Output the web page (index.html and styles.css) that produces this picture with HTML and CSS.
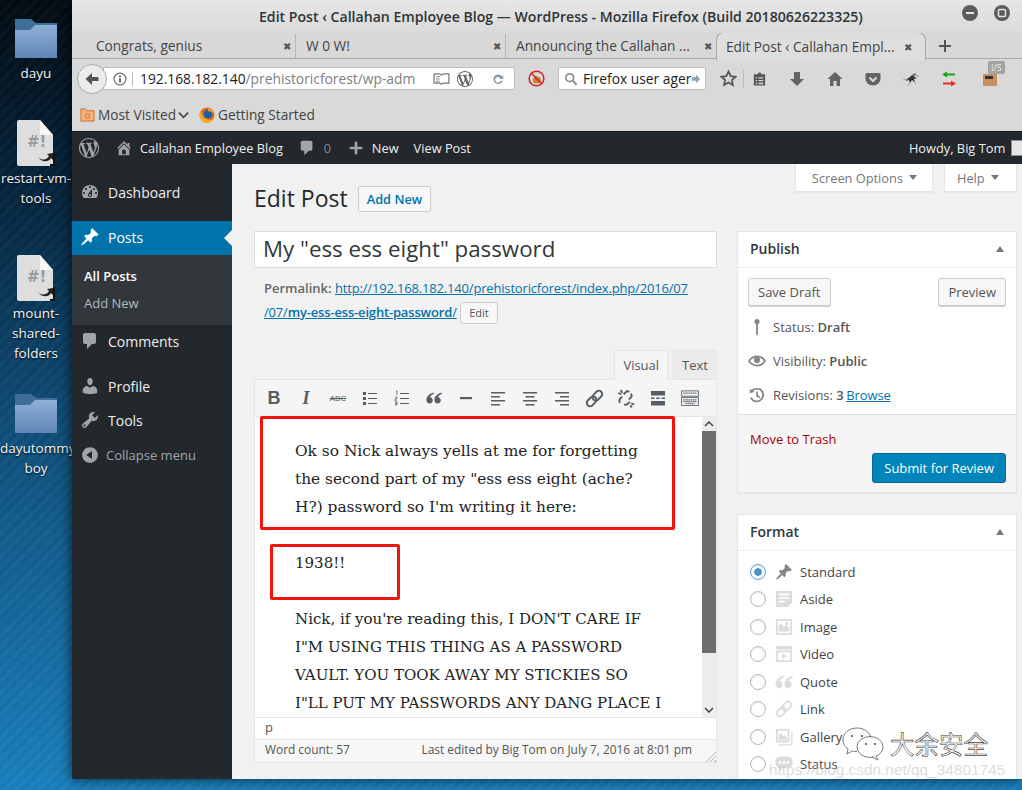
FILE: index.html
```html
<!DOCTYPE html>
<html lang="en">
<head>
    <meta charset="UTF-8">
    <meta name="viewport" content="width=device-width, initial-scale=1.0">
    <title>Edit Post</title>
    <link rel="stylesheet" href="styles.css">
</head>
<body>
<svg class="iconSheet" xmlns="http://www.w3.org/2000/svg">
    <defs><linearGradient id="folderFill" x1="0" y1="0" x2="0" y2="1"><stop offset="0" stop-color="#8fb0d6"/><stop offset="1" stop-color="#5f86b6"/></linearGradient></defs>
    <symbol id="wp" viewBox="0 0 20 20"><path d="M20 10c0-5.51-4.49-10-10-10C4.48 0 0 4.49 0 10c0 5.52 4.48 10 10 10 5.51 0 10-4.48 10-10zM7.78 15.37L4.37 6.22c.55-.02 1.17-.08 1.17-.08.5-.06.44-1.13-.06-1.11 0 0-1.45.11-2.37.11-.18 0-.37 0-.58-.01C4.12 2.69 6.87 1.11 10 1.11c2.33 0 4.45.87 6.05 2.34-.68-.11-1.65.39-1.65 1.58 0 .74.45 1.36.9 2.1.35.61.55 1.36.55 2.46 0 1.49-1.4 5-1.4 5l-3.03-8.37c.54-.02.82-.17.82-.17.5-.05.44-1.25-.06-1.22 0 0-1.44.12-2.38.12-.87 0-2.33-.12-2.33-.12-.5-.03-.56 1.2-.06 1.22l.92.08 1.26 3.41zM17.41 10c.24-.64.74-1.87.43-4.25.7 1.29 1.05 2.71 1.05 4.25 0 3.29-1.73 6.24-4.4 7.78.97-2.59 1.94-5.2 2.92-7.78zM6.1 18.09C3.12 16.65 1.11 13.53 1.11 10c0-1.3.23-2.48.72-3.59C3.25 10.3 4.67 14.2 6.1 18.09zm4.03-6.63l2.58 6.98c-.86.29-1.76.45-2.71.45-.79 0-1.57-.11-2.29-.33.81-2.38 1.62-4.74 2.42-7.1z"/></symbol>
    <symbol id="dashboard" viewBox="0 0 20 20"><path d="M3.76 16h12.48c1.1-1.37 1.76-3.11 1.76-5 0-4.42-3.58-8-8-8s-8 3.58-8 8c0 1.89.66 3.63 1.76 5zM10 4c.55 0 1 .45 1 1s-.45 1-1 1-1-.45-1-1 .45-1 1-1zM6 6c.55 0 1 .45 1 1s-.45 1-1 1-1-.45-1-1 .45-1 1-1zm8 0c.55 0 1 .45 1 1s-.45 1-1 1-1-.45-1-1 .45-1 1-1zm-5.37 5.55L12 7v6c0 1.1-.9 2-2 2s-2-.9-2-2c0-.57.24-1.08.63-1.45zM4 10c.55 0 1 .45 1 1s-.45 1-1 1-1-.45-1-1 .45-1 1-1zm12 0c.55 0 1 .45 1 1s-.45 1-1 1-1-.45-1-1 .45-1 1-1zm-5 3c0-.55-.45-1-1-1s-1 .45-1 1 .45 1 1 1 1-.45 1-1z" fill-rule="evenodd"/></symbol>
    <symbol id="pin" viewBox="0 0 20 20"><path d="M10.44 3.02l1.82-1.82 6.36 6.35-1.83 1.82c-1.05-.68-2.48-.57-3.41.36l-.75.75c-.92.93-1.04 2.35-.35 3.41l-1.83 1.82-2.41-2.41-2.8 2.79c-.42.42-3.38 2.71-3.8 2.29s1.86-3.39 2.28-3.81l2.79-2.79L4.1 9.36l1.83-1.82c1.05.69 2.48.57 3.4-.36l.75-.75c.93-.92 1.05-2.35.36-3.41z"/></symbol>
    <symbol id="comment" viewBox="0 0 20 20"><path d="M5 2h9c1.1 0 2 .9 2 2v7c0 1.1-.9 2-2 2h-2l-5 5v-5H5c-1.1 0-2-.9-2-2V4c0-1.1.9-2 2-2z"/></symbol>
    <symbol id="profile" viewBox="0 0 20 20"><path d="M10 9.25c-2.27 0-2.73-3.44-2.73-3.44C7 4.02 7.82 2 9.97 2c2.16 0 2.98 2.02 2.71 3.81 0 0-.41 3.44-2.68 3.44zm0 2.57L12.72 10c2.39 0 4.52 2.33 4.52 4.53v2.49s-3.65 1.13-7.24 1.13c-3.65 0-7.24-1.13-7.24-1.13v-2.49c0-2.25 1.94-4.48 4.47-4.48z"/></symbol>
    <symbol id="tools" viewBox="0 0 20 20"><path d="M16.68 9.77c-1.34 1.34-3.3 1.67-4.95.99l-5.41 6.52c-.99.99-2.59.99-3.58 0s-.99-2.59 0-3.57l6.52-5.42c-.68-1.65-.35-3.61.99-4.95 1.28-1.28 3.12-1.62 4.72-1.06l-2.89 2.89 2.82 2.82 2.86-2.87c.53 1.58.18 3.39-1.08 4.65zM3.81 16.21c.4.39 1.04.39 1.43 0 .4-.4.4-1.04 0-1.43-.39-.4-1.03-.4-1.43 0-.39.39-.39 1.03 0 1.43z"/></symbol>
    <symbol id="collapse" viewBox="0 0 20 20"><path d="M10 2.16c4.33 0 7.84 3.51 7.84 7.84s-3.51 7.84-7.84 7.84S2.16 14.33 2.16 10 5.71 2.16 10 2.16zm2 11.72V6.12L6.18 9.97z"/></symbol>
    <symbol id="home" viewBox="0 0 20 20"><path d="M16 8.5l1.53 1.53-1.06 1.06L10 4.62l-6.47 6.47-1.06-1.06L10 2.5l4 4v-2h2v4zm-6-2.46l6 5.99V18H4v-5.97zM12 17v-5H8v5h4z"/></symbol>
    <symbol id="plus" viewBox="0 0 20 20"><path d="M8.5 3h3v5.5H17v3h-5.500V17h-3v-5.500H3v-3h5.500z"/></symbol>
    <symbol id="location" viewBox="0 0 20 20"><path d="M10 1C8.300 1 7 2.300 7 4c0 1.300.8 2.400 2 2.800V18l1 1.500L11 18V6.800c1.200-.4 2-1.500 2-2.800 0-1.700-1.300-3-3-3z"/></symbol>
    <symbol id="eye" viewBox="0 0 20 20"><path d="M19.700 9.400C17.700 6 14 3.900 10 3.900S2.300 6 .3 9.400L0 10l.3.6c2 3.400 5.700 5.500 9.700 5.500s7.700-2.100 9.700-5.500l.3-.6-.3-.6zM10 14.100c-3.100 0-6-1.600-7.700-4.100C3.600 8 5.700 6.600 8 6.100c-.9.6-1.500 1.700-1.500 2.900 0 1.900 1.600 3.500 3.500 3.500s3.500-1.600 3.500-3.500c0-1.200-.6-2.300-1.500-2.900 2.300.5 4.400 1.900 5.700 3.900-1.700 2.500-4.600 4.100-7.700 4.100z"/></symbol>
    <symbol id="history" viewBox="0 0 20 20"><path d="M13.650 2.880c3.930 2.220 5.340 7.190 3.120 11.120-2.210 3.930-7.180 5.340-11.110 3.120-1.540-.87-2.700-2.170-3.410-3.650l1.800-.86c.51 1.080 1.360 2.030 2.490 2.670 2.970 1.660 6.720.61 8.380-2.360s.61-6.720-2.360-8.380C9.770 3.890 7.500 4.190 5.850 5.500l1.160 1.160L2 8V3l1.390 1.390c2.330-1.950 7.010-2.860 10.260-1.510zM9 6h2v4.250l3 1.790-1 1.660-4-2.400z"/></symbol>
    <symbol id="quote" viewBox="0 0 20 20"><path d="M9.500 3C5 4.300 .5 7.500.5 12.500c0 2.500 1.700 4.500 4 4.500s4-1.900 4-4.100-1.600-3.700-3.400-3.900c.4-1.800 2.200-3.200 4.700-4zM19.500 3C15 4.300 10.500 7.500 10.500 12.500c0 2.500 1.700 4.500 4 4.500s4-1.900 4-4.100-1.600-3.700-3.400-3.900c.4-1.800 2.200-3.200 4.700-4z"/></symbol>
    <symbol id="link" viewBox="0 0 20 20"><g transform="rotate(-45 10 10)" fill="none" stroke="currentColor" stroke-width="2"><rect x="0" y="6.500" width="11.500" height="7" rx="3.500"/><rect x="8.500" y="6.500" width="11.500" height="7" rx="3.500"/></g></symbol>
    <symbol id="aside" viewBox="0 0 20 20"><path d="M1 1h18v13l-5 5H1zM4 4v2h12V4zm0 4v2h12V8zm0 4v2h7v-2z" fill-rule="evenodd"/></symbol>
    <symbol id="image" viewBox="0 0 20 20"><path d="M1 1h18v18H1zM3 3v14h14V3zM4 15V9l3-3 3 4 2-2 4 3v4zM13 4.500a2 2 0 1 1 0 4 2 2 0 0 1 0-4z" fill-rule="evenodd"/></symbol>
    <symbol id="video" viewBox="0 0 20 20"><path d="M1 6h18v13H1zM3 8v9h14V8zM8 9.500l5.500 3-5.500 3zM1 1h18v4H1z" fill-rule="evenodd"/></symbol>
    <symbol id="gallery" viewBox="0 0 20 20"><path d="M1 1h15v15H1zM3 3v11h11V3zM4 13V8l2.500-2.500L9 9l1.500-1.500L13 10v3zM18 4h1.500v15.500H4V18h14z" fill-rule="evenodd"/></symbol>
    <symbol id="status" viewBox="0 0 20 20"><path d="M5 2h10c2.500 0 4.500 2 4.500 4.500v3c0 2.500-2 4.500-4.500 4.500H9l-4 4v-4c-2.500 0-4.500-2-4.500-4.500v-3C.5 4 2.500 2 5 2zM5.500 7a1.500 1.500 0 1 0 0 3 1.500 1.500 0 0 0 0-3zm4.500 0a1.500 1.500 0 1 0 0 3 1.500 1.500 0 0 0 0-3zm4.500 0a1.500 1.500 0 1 0 0 3 1.500 1.500 0 0 0 0-3z" fill-rule="evenodd"/></symbol>
    <symbol id="folder" viewBox="0 0 44 40"><path d="M1 1h16l5 4h21v35H1z" fill="#3f6f98"/><path d="M1 12h15l5-5h22v33H1z" fill="url(#folderFill)"/></symbol>
    <symbol id="script" viewBox="0 0 38 46"><path d="M2 0h21l13 15v29q0 2-2 2H2q-2 0-2-2V2q0-2 2-2z" fill="#dedede"/><path d="M23 0l13 15H23z" fill="#f6f6f6"/><path d="M21 37c4 4 9 3 11-1l-2-2 6-1v7l-2-2c-3 5-10 4-13-1z" fill="#222"/><path d="M36 32h2v14h-5v-2h3z" fill="#111"/></symbol>
</svg>

<div class="desktop">
    <div class="deskItem deskItemA">
        <svg class="deskFolder"><use href="#folder"/></svg>
        <div class="deskLabel">dayu</div>
    </div>
    <div class="deskItem deskItemB">
        <svg class="deskScript"><use href="#script"/></svg>
        <div class="deskScriptMark">#!</div>
        <div class="deskLabel">restart-vm-<br>tools</div>
    </div>
    <div class="deskItem deskItemC">
        <svg class="deskScript"><use href="#script"/></svg>
        <div class="deskScriptMark">#!</div>
        <div class="deskLabel">mount-<br>shared-<br>folders</div>
    </div>
    <div class="deskItem">
        <svg class="deskFolder"><use href="#folder"/></svg>
        <div class="deskLabel">dayutommy<br>boy</div>
    </div>
</div>

<div class="ffWindow">
    <div class="ffTitle">
        <span class="ffTitleText">Edit Post ‹ Callahan Employee Blog — WordPress - Mozilla Firefox (Build 20180626223325)</span>
        <div class="ffWinBtns">
            <svg class="ffWinBtn" viewBox="0 0 16 16"><circle cx="8" cy="8" r="8" fill="#5c5c5c"/><rect x="4" y="7" width="8" height="2" fill="#e4e4e4"/></svg>
            <svg class="ffWinBtn" viewBox="0 0 16 16"><circle cx="8" cy="8" r="8" fill="#5c5c5c"/><rect x="4.500" y="4.500" width="7" height="7" rx="1" fill="none" stroke="#e4e4e4" stroke-width="1.500"/></svg>
        </div>
    </div>
    <div class="ffTabs">
        <div class="ffTab"><span class="ffTabText">Congrats, genius</span><span class="ffTabClose">✖</span></div>
        <div class="ffTab"><span class="ffTabText">W 0 W!</span><span class="ffTabClose">✖</span></div>
        <div class="ffTab ffTabPlain"><span class="ffTabText">Announcing the Callahan ...</span><span class="ffTabClose">✖</span></div>
        <div class="ffTab ffTabActive"><span class="ffTabText">Edit Post ‹ Callahan Empl...</span><span class="ffTabClose">✖</span></div>
        <svg class="ffNewTab" viewBox="0 0 14 14"><path d="M6 1h2v5h5v2H8v5H6V8H1V6h5z" fill="#555"/></svg>
    </div>
    <div class="ffNav">
        <div class="ffBack"><svg viewBox="0 0 16 16"><path d="M8 2L1.500 8 8 14v-4h6.500V6H8z" fill="#555"/></svg></div>
        <div class="ffUrl">
            <svg class="ffInfo" viewBox="0 0 16 16"><circle cx="8" cy="8" r="6.800" fill="none" stroke="#555" stroke-width="1.200"/><path d="M7 7h2v5H7zM7 4h2v2H7z" fill="#555"/></svg>
            <span class="ffUrlText"><b>192.168.182.140</b>/prehistoricforest/wp-adm</span>
            <svg class="ffReader" viewBox="0 0 18 14"><path d="M1 2h6l2 1.500L11 2h6v10h-6l-2 1-2-1H1z" fill="none" stroke="#777" stroke-width="1.300"/><path d="M3 5h4M3 7.500h4M3 10h4" stroke="#777"/></svg>
            <svg class="ffUrlWp"><use href="#wp"/></svg>
            <svg class="ffReload" viewBox="0 0 16 16"><path d="M13 5.500A5.500 5.500 0 1 0 13.500 10H11a3.200 3.200 0 1 1-.5-3L8.500 8H14V2.500z" fill="#8b9aa8"/></svg>
        </div>
        <svg class="ffBlock" viewBox="0 0 18 18"><path d="M5 10l3-4 5 2 1 4-3 2H6z" fill="#c9822c"/><circle cx="9" cy="9" r="7.800" fill="none" stroke="#d8232a" stroke-width="1.600"/><path d="M3.500 3.500l11 11" stroke="#d8232a" stroke-width="1.600"/></svg>
        <div class="ffSearch">
            <svg class="ffGlass" viewBox="0 0 16 16"><circle cx="6.500" cy="6.500" r="4.500" fill="none" stroke="#8f8f8f" stroke-width="2"/><path d="M10 10l4.500 4.500" stroke="#8f8f8f" stroke-width="2.400"/></svg>
            <span class="ffSearchText">Firefox user ager</span>
            <svg class="ffGo" viewBox="0 0 12 12"><path d="M6 1l5 5-5 5V8H1V4h5z" fill="#8fa3b5"/></svg>
        </div>
        <div class="ffTools">
            <svg class="ffStar" viewBox="0 0 18 18"><path d="M9 1.500l2.300 5 5.300.6-4 3.600 1.100 5.300L9 13.300 4.300 16l1.100-5.300-4-3.600 5.300-.6z" fill="none" stroke="#555" stroke-width="1.800"/></svg>
            <span class="ffToolSep"></span>
            <svg class="ffTool ffToolList" viewBox="0 0 16 16"><path d="M2 3h4l1-2h2l1 2h4v12H2zM4 6v1.500h1.500V6zm3 0v1.500h5V6zM4 9v1.500h1.500V9zm3 0v1.500h5V9zm-3 3v1.500h1.500V12zm3 0v1.500h5V12z" fill="#555" fill-rule="evenodd"/></svg>
            <svg class="ffTool" viewBox="0 0 16 16"><path d="M5 1h6v7h4l-7 7-7-7h4z" fill="#636363"/></svg>
            <svg class="ffTool" viewBox="0 0 16 16"><path d="M8 1l7.500 7H13v7H9.500v-5h-3v5H3V8H.5z" fill="#636363"/></svg>
            <svg class="ffTool" viewBox="0 0 16 16"><path d="M2 2h12q1.500 0 1.500 1.500V8a7.500 6.500 0 0 1-15 0V3.500Q.5 2 2 2z" fill="#636363"/><path d="M4.500 6.500L8 10l3.500-3.500" fill="none" stroke="#d9d9d9" stroke-width="2"/></svg>
            <svg class="ffTool" viewBox="0 0 16 16"><path d="M4 8l3-2 2-2 4-2-2 4 3 1-3 1 1 3-3-2-2 3-1-3-3 1z" fill="#333"/><path d="M0 9l5-1M9 4l7 1M7 12l-2 3M10 10l3 3" stroke="#999"/></svg>
            <svg class="ffTool" viewBox="0 0 16 16"><path d="M1 3.500L6 .5v2h8v2H6v2z" fill="#12a81a"/><path d="M15 12.500l-5-3v2H2v2h8v2z" fill="#f0282c"/></svg>
            <div class="ffBurp">
                <svg viewBox="0 0 16 16"><rect x="1" y="3" width="14" height="12" fill="#c98f5f"/><rect x="3" y="5" width="8" height="3" fill="#333"/></svg>
                <span class="ffBurpTag">I/S</span>
            </div>
        </div>
    </div>
    <div class="ffMarks">
        <svg class="ffMarkIcon" viewBox="0 0 16 16"><path d="M1 2h5l1 2h8v11H1z" fill="#f3b37a" stroke="#d9691c"/><circle cx="8" cy="9.500" r="2.500" fill="none" stroke="#d9691c"/></svg>
        <span class="ffMarkText">Most Visited</span>
        <svg class="ffMarkChev" viewBox="0 0 12 8"><path d="M1 1.500l5 5 5-5" fill="none" stroke="#444" stroke-width="1.800"/></svg>
        <svg class="ffMarkIcon ffFox" viewBox="0 0 16 16"><circle cx="8" cy="8" r="7.500" fill="#e66a1e"/><circle cx="9" cy="7" r="4.500" fill="#1f5fa8"/><path d="M2 4c1 5 4 9 9 9 2 0 3-1 4-3-1 4-4 6-7 6C4 16 .5 12 .5 8 .5 6 1 5 2 4zM9 2c3 0 5 2 5 5-1-2-3-3-5-3z" fill="#f5a623"/></svg>
        <span class="ffMarkText">Getting Started</span>
    </div>

    <div class="wpBar">
        <svg class="wpBarLogo"><use href="#wp"/></svg>
        <svg class="wpBarIcon wpBarHome"><use href="#home"/></svg>
        <span class="wpBarText">Callahan Employee Blog</span>
        <svg class="wpBarIcon wpBarBubble"><use href="#comment"/></svg>
        <span class="wpBarCount">0</span>
        <svg class="wpBarIcon wpBarPlus"><use href="#plus"/></svg>
        <span class="wpBarText">New</span>
        <span class="wpBarText wpBarView">View Post</span>
        <span class="wpBarText wpBarHowdy">Howdy, Big Tom</span>
        <span class="wpBarAvatar"></span>
    </div>

    <div class="wpBody">
        <div class="wpMenu">
            <div class="menuRow menuDash"><svg class="menuIcon"><use href="#dashboard"/></svg>Dashboard</div>
            <div class="menuRow menuActive"><svg class="menuIcon"><use href="#pin"/></svg>Posts</div>
            <div class="menuSub">
                <div class="menuSubItem menuSubOn">All Posts</div>
                <div class="menuSubItem">Add New</div>
            </div>
            <div class="menuRow menuComments"><svg class="menuIcon"><use href="#comment"/></svg>Comments</div>
            <div class="menuRow menuProfile"><svg class="menuIcon"><use href="#profile"/></svg>Profile</div>
            <div class="menuRow"><svg class="menuIcon"><use href="#tools"/></svg>Tools</div>
            <div class="menuRow menuCollapse"><svg class="menuIcon"><use href="#collapse"/></svg>Collapse menu</div>
        </div>

        <div class="wpContent">
            <div class="screenMeta">
                <div class="metaTab">Screen Options<i class="metaArrow"></i></div>
                <div class="metaTab metaHelp">Help<i class="metaArrow"></i></div>
            </div>
            <div class="headRow">
                <h1 class="pageTitle">Edit Post</h1>
                <span class="addNew">Add New</span>
            </div>
            <div class="columns">
                <div class="mainCol">
                    <div class="postTitle">My "ess ess eight" password</div>
                    <div class="permalink">
                        <b>Permalink:</b> <a href="#">http://192.168.182.140/prehistoricforest/index.php/2016/07</a><br>
                        <a href="#">/07/<b>my-ess-ess-eight-password</b>/</a> <span class="permaEdit">Edit</span>
                    </div>
                    <div class="editTabs">
                        <span class="editTab editTabOn">Visual</span>
                        <span class="editTab">Text</span>
                    </div>
                    <div class="editBox">
                        <div class="toolbar">
                            <span class="tb tbB">B</span>
                            <span class="tb tbI">I</span>
                            <span class="tb tbAbc">ABC</span>
                            <span class="tb"><svg viewBox="0 0 16 16"><path d="M1 2h3v3H1zM1 7h3v3H1zM1 12h3v3H1z" fill="#555d66"/><path d="M6 3.500h9M6 8.500h9M6 13.500h9" stroke="#555d66" stroke-width="1.200"/></svg></span>
                            <span class="tb"><svg viewBox="0 0 16 16"><path d="M6 3.500h9M6 8.500h9M6 13.500h9" stroke="#555d66" stroke-width="1.200"/><path d="M2 1h1v4M1 7h2v2H1v2h2M1 12h2v3H1M1 13.500h2" fill="none" stroke="#555d66" stroke-width=".8"/></svg></span>
                            <span class="tb"><svg><use href="#quote"/></svg></span>
                            <span class="tb"><svg viewBox="0 0 16 16"><rect x="2" y="7" width="12" height="2.200" fill="#555d66"/></svg></span>
                            <span class="tb"><svg viewBox="0 0 16 16"><path d="M1 2h14v1.500H1zM1 6h9v1.500H1zM1 10h14v1.500H1zM1 14h9v1.500H1z" fill="#555d66"/></svg></span>
                            <span class="tb"><svg viewBox="0 0 16 16"><path d="M1 2h14v1.500H1zM3.500 6h9v1.500h-9zM1 10h14v1.500H1zM3.500 14h9v1.500h-9z" fill="#555d66"/></svg></span>
                            <span class="tb"><svg viewBox="0 0 16 16"><path d="M1 2h14v1.500H1zM6 6h9v1.500H6zM1 10h14v1.500H1zM6 14h9v1.500H6z" fill="#555d66"/></svg></span>
                            <span class="tb tbWide"><svg><use href="#link"/></svg></span>
                            <span class="tb tbWide"><svg viewBox="0 0 20 20"><path d="M7 5.500L9 3.500a3 3 0 0 1 4-.5M14.500 5a3 3 0 0 1 0 4l-2 2M5.500 8l-2 2a3 3 0 0 0 0 4.500M7.500 16a3 3 0 0 0 4-.5l2-2M1.500 4l3 1.500M4 1l1.500 3M15 15l3 1.500M14 17l1.500 2.500" fill="none" stroke="#555d66" stroke-width="2"/></svg></span>
                            <span class="tb"><svg viewBox="0 0 16 16"><path d="M1 1h14v4.500H1zM1 11h14v4.500H1zM1 7.500h3.500v1.500H1zM6.200 7.500h3.500v1.500H6.200zM11.500 7.500H15v1.500h-3.500z" fill="#555d66"/></svg></span>
                            <span class="tb tbKb"><svg viewBox="0 0 20 18"><path d="M.5 1h19v6H.5zM.5 8.500h19v9H.5z" fill="none" stroke="#555d66"/><path d="M2.500 3.500h15M2.500 11h15M2.500 13h15M5 15.300h10" stroke="#555d66" stroke-width="1.400" stroke-dasharray="1.500 .7"/></svg></span>
                        </div>
                        <div class="editArea">
                            <div class="editText">
                                <p class="editBig">Ok so Nick always yells at me for forgetting<br>the second part of my "ess ess eight (ache?<br>H?) password so I'm writing it here:</p>
                                <p>1938!!</p>
                                <p>Nick, if you're reading this, I DON'T CARE IF<br>I"M USING THIS THING AS A PASSWORD<br>VAULT. YOU TOOK AWAY MY STICKIES SO<br>I"LL PUT MY PASSWORDS ANY DANG PLACE I<br>WANT TO</p>
                            </div>
                            <div class="scrollBar">
                                <svg class="scrollArrow" viewBox="0 0 10 6"><path d="M1 5l4-4 4 4" fill="none" stroke="#444" stroke-width="1.500"/></svg>
                                <div class="scrollTrack"><div class="scrollThumb"></div></div>
                                <svg class="scrollArrow" viewBox="0 0 10 6"><path d="M1 1l4 4 4-4" fill="none" stroke="#444" stroke-width="1.500"/></svg>
                            </div>
                            <div class="redBox redBoxA"></div>
                            <div class="redBox redBoxB"></div>
                        </div>
                        <div class="editPath">p</div>
                        <div class="editFoot">
                            <span>Word count: 57</span>
                            <span>Last edited by Big Tom on July 7, 2016 at 8:01 pm</span>
                            <i class="grip"></i>
                        </div>
                    </div>
                </div>

                <div class="sideCol">
                    <div class="box">
                        <div class="boxHead">Publish<i class="boxToggle"></i></div>
                        <div class="pubActions">
                            <span class="btn">Save Draft</span>
                            <span class="btn">Preview</span>
                        </div>
                        <div class="pubRow"><svg class="pubIcon"><use href="#location"/></svg>Status: <b>Draft</b></div>
                        <div class="pubRow"><svg class="pubIcon"><use href="#eye"/></svg>Visibility: <b>Public</b></div>
                        <div class="pubRow"><svg class="pubIcon"><use href="#history"/></svg>Revisions: <b>3</b>&nbsp;<a href="#">Browse</a></div>
                        <div class="pubFoot">
                            <div class="trash">Move to Trash</div>
                            <div class="submitWrap"><span class="btnPrimary">Submit for Review</span></div>
                        </div>
                    </div>
                    <div class="box boxFormat">
                        <div class="boxHead">Format<i class="boxToggle"></i></div>
                        <div class="formats">
                            <div class="fmt"><i class="radio radioOn"></i><svg class="fmtIcon fmtIconOn"><use href="#pin"/></svg>Standard</div>
                            <div class="fmt"><i class="radio"></i><svg class="fmtIcon"><use href="#aside"/></svg>Aside</div>
                            <div class="fmt"><i class="radio"></i><svg class="fmtIcon"><use href="#image"/></svg>Image</div>
                            <div class="fmt"><i class="radio"></i><svg class="fmtIcon"><use href="#video"/></svg>Video</div>
                            <div class="fmt"><i class="radio"></i><svg class="fmtIcon"><use href="#quote"/></svg>Quote</div>
                            <div class="fmt"><i class="radio"></i><svg class="fmtIcon"><use href="#link"/></svg>Link</div>
                            <div class="fmt"><i class="radio"></i><svg class="fmtIcon"><use href="#gallery"/></svg>Gallery</div>
                            <div class="fmt"><i class="radio"></i><svg class="fmtIcon"><use href="#status"/></svg>Status</div>
                        </div>
                    </div>
                </div>
            </div>
        </div>
    </div>
</div>

<div class="watermark">
    <svg class="wmIcon" viewBox="0 0 42 34"><path d="M15 1C7 1 1 6 1 13c0 4 2 7 5 9l-1 5 5-3c2 .5 3 .6 5 .6M15 1c7 0 13 4 14 10" fill="#fff" fill-opacity=".6" stroke="#444" stroke-width=".7"/><ellipse cx="28" cy="20" rx="13" ry="10.500" fill="#fff" fill-opacity=".8" stroke="#444" stroke-width=".7"/><path d="M34 29l2 4-6-3" fill="#fff" stroke="#444" stroke-width=".7"/><circle cx="10" cy="9" r="1" fill="#444"/><circle cx="20" cy="9" r="1" fill="#444"/><circle cx="24" cy="17" r="1" fill="#444"/><circle cx="33" cy="17" r="1" fill="#444"/></svg>
    <span class="wmText">大余安全</span>
</div>
<div class="wmUrl">https://blog.csdn.net/qq_34801745</div>
</body>
</html>
```
FILE: styles.css
```css
html, body {
    margin: 0;
    height: 790px;
    overflow: hidden;
}
body {
    display: flex;
    align-items: flex-start;
    position: relative;
    font-family: "Open Sans", sans-serif;
    background:
        repeating-linear-gradient(135deg, rgba(255,255,255,.025) 0 4px, rgba(0,0,0,.025) 4px 8px),
        linear-gradient(180deg, #020b13 0%, #06263f 25%, #0f4f7a 55%, #1a80bd 100%);
}
.iconSheet {
    position: absolute;
    width: 0;
    height: 0;
}

/* desktop */
.desktop {
    width: 72px;
    flex: none;
    padding-top: 18px;
}
.deskItem {
    width: 72px;
    position: relative;
    text-align: center;
}
.deskItemA { margin-bottom: 37px; }
.deskItemB { margin-bottom: 47px; }
.deskItemC { margin-bottom: 30px; }
.deskFolder {
    display: block;
    width: 44px;
    height: 40px;
    margin: 0 0 5px 14px;
}
.deskScript {
    display: block;
    width: 38px;
    height: 46px;
    margin: 0 0 2px 17px;
}
.deskScriptMark {
    position: absolute;
    top: 13px;
    left: 27px;
    color: #9a9a9a;
    font: bold 15px "DejaVu Sans", sans-serif;
}
.deskLabel {
    color: #f4f4f4;
    font-size: 13.500px;
    line-height: 20px;
    white-space: nowrap;
    text-shadow: 0 1px 2px #000;
}

/* firefox */
.ffWindow {
    width: 950px;
    height: 779px;
    flex: none;
    overflow: hidden;
    position: relative;
    z-index: 1;
    background: #d9d9d9;
    box-shadow: 0 0 12px rgba(0,0,0,.7);
    display: flex;
    flex-direction: column;
}
.ffTitle {
    height: 33px;
    flex: none;
    display: flex;
    align-items: center;
    position: relative;
    background: linear-gradient(#e6e6e6, #dadada);
}
.ffTitleText {
    margin-left: 187px;
    font-size: 14.100px;
    font-weight: 600;
    color: #2e3436;
    white-space: nowrap;
}
.ffWinBtns {
    position: absolute;
    right: 12px;
    top: 5px;
    display: flex;
    gap: 16px;
}
.ffWinBtn {
    width: 16px;
    height: 16px;
}
.ffTabs {
    height: 26px;
    flex: none;
    display: flex;
    align-items: center;
    padding-left: 14px;
    background: #d8d8d8;
    border-bottom: 1px solid #a8a8a8;
    box-sizing: border-box;
}
.ffTab {
    width: 210px;
    height: 24px;
    flex: none;
    box-sizing: border-box;
    padding: 0 4px 0 10px;
    display: flex;
    align-items: center;
    justify-content: space-between;
    border-right: 1px solid #b8b8b8;
    font-size: 13.700px;
    color: #444;
}
.ffTabPlain {
    border-right: 0;
}
.ffTabActive {
    height: 28px;
    margin-top: 1px;
    padding: 0 13px 0 9px;
    background: #dedede;
    border: 1px solid #a8a8a8;
    border-bottom: 0;
    border-radius: 8px 8px 0 0;
}
.ffTabClose {
    font-size: 10px;
    color: #555;
}
.ffNewTab {
    width: 14px;
    height: 14px;
    margin-left: 12px;
}
.ffNav {
    height: 39px;
    flex: none;
    display: flex;
    align-items: center;
    padding-left: 5px;
    position: relative;
}
.ffBack {
    width: 30px;
    height: 30px;
    box-sizing: border-box;
    flex: none;
    border: 1px solid #a9a9a9;
    border-radius: 50%;
    background: #ececec;
    display: flex;
    align-items: center;
    justify-content: center;
    position: relative;
    z-index: 1;
}
.ffBack svg {
    width: 16px;
    height: 16px;
}
.ffUrl {
    width: 412px;
    height: 23px;
    flex: none;
    margin-left: -4px;
    box-sizing: border-box;
    background: #fff;
    border: 1px solid #bdbdbd;
    border-radius: 0 2px 2px 0;
    display: flex;
    align-items: center;
    padding-left: 9px;
}
.ffInfo {
    width: 14px;
    height: 14px;
    flex: none;
    padding-right: 5px;
    border-right: 1px solid #bbb;
}
.ffUrlText {
    width: 291px;
    flex: none;
    margin-left: 7px;
    font-size: 13.800px;
    color: #808080;
    white-space: nowrap;
}
.ffUrlText b {
    font-weight: 400;
    color: #1c1c1c;
}
.ffReader {
    width: 17px;
    height: 13px;
    margin-left: 2px;
    flex: none;
}
.ffUrlWp {
    width: 16px;
    height: 16px;
    margin-left: 7px;
    fill: #666;
    flex: none;
}
.ffReload {
    width: 14px;
    height: 14px;
    margin-left: 18px;
    flex: none;
}
.ffBlock {
    width: 17px;
    height: 17px;
    margin-left: 13px;
    flex: none;
}
.ffSearch {
    width: 148px;
    height: 23px;
    flex: none;
    margin-left: 13px;
    box-sizing: border-box;
    background: #fff;
    border: 1px solid #bdbdbd;
    border-radius: 2px;
    display: flex;
    align-items: center;
    padding: 0 4px 0 5px;
}
.ffGlass {
    width: 14px;
    height: 14px;
    flex: none;
}
.ffSearchText {
    margin-left: 5px;
    flex: 1;
    min-width: 0;
    font-size: 13.800px;
    color: #1c1c1c;
    white-space: nowrap;
    overflow: hidden;
}
.ffGo {
    width: 10px;
    height: 10px;
    flex: none;
}
.ffTools {
    display: flex;
    align-items: center;
    margin-left: 14px;
}
.ffStar {
    width: 17px;
    height: 17px;
}
.ffToolSep {
    width: 1px;
    height: 18px;
    margin: 0 8px 0 6px;
    background: #bbb;
}
.ffTool {
    width: 16px;
    height: 16px;
    margin-right: 22px;
}
.ffToolList {
    width: 15px;
}
.ffBurp {
    position: relative;
    width: 16px;
    height: 16px;
    margin-left: 3px;
}
.ffBurp svg {
    display: block;
}
.ffBurpTag {
    position: absolute;
    left: 6px;
    top: -10px;
    padding: 0 3px;
    font-size: 9px;
    line-height: 13px;
    color: #eee;
    background: #a3a3a3;
    border-radius: 2px;
}
.ffMarks {
    height: 33px;
    flex: none;
    display: flex;
    align-items: center;
    padding-left: 8px;
    font-size: 13.700px;
    color: #444;
}
.ffMarkIcon {
    width: 15px;
    height: 15px;
    flex: none;
}
.ffMarkText {
    margin-left: 3px;
}
.ffMarkChev {
    width: 11px;
    height: 8px;
    margin: 0 10px 0 2px;
}
.ffFox {
    width: 16px;
    height: 16px;
}

/* wp admin bar */
.wpBar {
    height: 33px;
    flex: none;
    box-sizing: border-box;
    border-top: 1px solid #15191c;
    background: #23282d;
    display: flex;
    align-items: center;
    padding-left: 7px;
    font-size: 12.800px;
    color: #eee;
}
.wpBarLogo {
    width: 20px;
    height: 20px;
    flex: none;
    fill: #a0a5aa;
}
.wpBarIcon {
    width: 18px;
    height: 18px;
    fill: #a0a5aa;
    flex: none;
}
.wpBarHome { margin-left: 16px; }
.wpBarText {
    margin-left: 7px;
    flex: none;
    white-space: nowrap;
}
.wpBarBubble { margin-left: 15px; }
.wpBarCount {
    margin-left: 8px;
    flex: none;
    width: 8px;
    color: #82878c;
}
.wpBarPlus { margin-left: 15px; }
.wpBarView { margin-left: 15px; }
.wpBarHowdy { margin-left: 438px; }
.wpBarAvatar {
    width: 14px;
    height: 14px;
    flex: none;
    margin-left: 6px;
    border: 1px solid #8a8f94;
    background: #e5e5e5;
}

/* body */
.wpBody {
    flex: 1;
    min-height: 0;
    display: flex;
    background: #f1f1f1;
}
.wpMenu {
    width: 160px;
    flex: none;
    background: #23282d;
    padding-top: 12px;
    font-size: 14px;
    color: #eee;
}
.menuRow {
    height: 34px;
    box-sizing: border-box;
    padding: 0 0 2px 8px;
    display: flex;
    align-items: center;
    position: relative;
}
.menuIcon {
    width: 20px;
    height: 20px;
    margin-right: 8px;
    fill: #a0a5aa;
    flex: none;
}
.menuDash { margin-bottom: 11px; }
.menuActive {
    background: #0073aa;
    color: #fff;
}
.menuActive .menuIcon { fill: #fff; }
.menuActive::after {
    content: "";
    position: absolute;
    right: 0;
    top: 9px;
    border: 8px solid transparent;
    border-right-color: #f1f1f1;
    border-left-width: 0;
}
.menuSub {
    height: 70px;
    box-sizing: border-box;
    padding-top: 8px;
    background: #32373c;
    font-size: 13px;
    color: #b4b9be;
}
.menuSubItem {
    height: 27px;
    line-height: 27px;
    padding-left: 12px;
}
.menuSubOn {
    font-weight: 600;
    color: #fff;
}
.menuComments { margin-bottom: 11px; }
.menuCollapse {
    padding-bottom: 0;
    font-size: 13px;
    color: #a0a5aa;
}
.menuCollapse .menuIcon {
    margin-right: 6px;
}

.wpContent {
    flex: 1;
    min-width: 0;
    padding-left: 22px;
}
.screenMeta {
    height: 28px;
    display: flex;
    justify-content: flex-end;
    gap: 11px;
    padding-right: 5px;
}
.metaTab {
    height: 28px;
    box-sizing: border-box;
    padding: 0 15px 0 16px;
    display: flex;
    align-items: center;
    gap: 6px;
    background: #fff;
    border: 1px solid #e5e5e5;
    border-top: 0;
    box-shadow: 0 1px 1px rgba(0,0,0,.04);
    font-size: 12.800px;
    color: #72777c;
}
.metaHelp {
    width: 73px;
    padding-left: 12px;
}
.metaArrow {
    border: 4px solid transparent;
    border-top: 5px solid #72777c;
    border-bottom: 0;
}
.headRow {
    display: flex;
    align-items: center;
    gap: 10px;
    height: 32px;
    margin-top: -10px;
}
.pageTitle {
    margin: 0;
    font-size: 23px;
    font-weight: 400;
    color: #23282d;
}
.addNew {
    height: 26px;
    line-height: 24px;
    box-sizing: border-box;
    margin-top: 2px;
    padding: 0 8px;
    border: 1px solid #ccc;
    border-radius: 2px;
    background: #f7f7f7;
    font-size: 12.800px;
    font-weight: 600;
    color: #0073aa;
}
.columns {
    display: flex;
    gap: 20px;
    margin-top: 17px;
    align-items: flex-start;
}
.mainCol {
    width: 463px;
    flex: none;
}
.postTitle {
    height: 37px;
    line-height: 33px;
    box-sizing: border-box;
    padding-left: 8px;
    background: #fff;
    border: 1px solid #ddd;
    font-size: 22.300px;
    color: #32373c;
}
.permalink {
    margin: 8px 0 0 10px;
    font-size: 13px;
    line-height: 24px;
    color: #666;
    white-space: nowrap;
}
.permalink b {
    font-weight: 600;
}
.permalink a {
    color: #0073aa;
    letter-spacing: -.17px;
}
.permaEdit {
    display: inline-block;
    height: 22px;
    line-height: 20px;
    box-sizing: border-box;
    padding: 0 8px;
    border: 1px solid #ccc;
    border-radius: 3px;
    background: #f7f7f7;
    font-size: 11px;
    color: #555;
}
.editTabs {
    display: flex;
    justify-content: flex-end;
    gap: 5px;
    margin-top: 26px;
    height: 29px;
}
.editTab {
    height: 29px;
    line-height: 28px;
    box-sizing: border-box;
    padding: 0 8px;
    border: 1px solid #e5e5e5;
    border-bottom: 0;
    background: #ebebeb;
    font-size: 13px;
    color: #555;
}
.editTabOn {
    height: 30px;
    background: #f5f5f5;
    position: relative;
    z-index: 1;
}
.editBox {
    border: 1px solid #e5e5e5;
    background: #fff;
}
.toolbar {
    height: 36px;
    display: flex;
    align-items: center;
    padding-left: 3px;
    background: #f5f5f5;
    border-bottom: 1px solid #e5e5e5;
}
.tb {
    width: 32px;
    flex: none;
    display: flex;
    align-items: center;
    justify-content: center;
    color: #555d66;
}
.tb svg {
    width: 16px;
    height: 16px;
    fill: #555d66;
}
.tb.tbWide svg {
    width: 19px;
    height: 19px;
}
.tbKb svg {
    width: 18px;
    height: 16px;
}
.tbB {
    font: bold 18px "Liberation Sans", sans-serif;
}
.tbI {
    font: italic bold 18px "Liberation Serif", serif;
}
.tbAbc {
    font: 8px "Liberation Sans", sans-serif;
    text-decoration: line-through;
}
.editArea {
    height: 300px;
    display: flex;
    position: relative;
}
.editText {
    flex: 1;
    min-width: 0;
    overflow: hidden;
    padding-left: 40px;
    font-family: "DejaVu Serif", serif;
    font-size: 15px;
    line-height: 28px;
    color: #222;
    white-space: nowrap;
}
.editText p {
    margin: 20px 0 28px;
}
.editText .editBig {
    font-size: 15.400px;
}
.scrollBar {
    width: 14px;
    flex: none;
    display: flex;
    flex-direction: column;
    background: #ededed;
}
.scrollArrow {
    width: 10px;
    height: 6px;
    flex: none;
    margin: 4px 2px;
}
.scrollTrack {
    flex: 1;
}
.scrollThumb {
    height: 222px;
    background: #6e6e6e;
}
.redBox {
    position: absolute;
    box-sizing: border-box;
    border: 3px solid #f2140c;
    border-radius: 2px;
}
.redBoxA {
    left: 5px;
    top: -1px;
    width: 415px;
    height: 114px;
}
.redBoxB {
    left: 15px;
    top: 127px;
    width: 130px;
    height: 56px;
}
.editPath {
    height: 22px;
    line-height: 19px;
    box-sizing: border-box;
    padding-left: 10px;
    border-top: 1px solid #e5e5e5;
    font-size: 13px;
    color: #555;
}
.editFoot {
    height: 23px;
    box-sizing: border-box;
    display: flex;
    justify-content: space-between;
    align-items: center;
    padding: 0 24px 4px 10px;
    position: relative;
    border-top: 1px solid #e5e5e5;
    background: #f7f7f7;
    font-size: 11.900px;
    color: #555;
}
.grip {
    position: absolute;
    right: 0;
    bottom: 0;
    width: 11px;
    height: 11px;
    background: repeating-linear-gradient(135deg, transparent 0 2px, #b5b5b5 2px 3px);
    clip-path: polygon(100% 0, 100% 100%, 0 100%);
}

.sideCol {
    width: 280px;
    flex: none;
}
.box {
    background: #fff;
    border: 1px solid #e5e5e5;
    box-sizing: border-box;
    box-shadow: 0 1px 1px rgba(0,0,0,.04);
}
.boxFormat {
    margin-top: 21px;
}
.boxHead {
    height: 36px;
    box-sizing: border-box;
    display: flex;
    align-items: center;
    justify-content: space-between;
    padding: 0 12px 2px;
    border-bottom: 1px solid #eee;
    font-size: 14px;
    font-weight: 600;
    color: #32373c;
}
.boxToggle {
    border: 4px solid transparent;
    border-bottom: 6px solid #72777c;
    border-top: 0;
}
.pubActions {
    display: flex;
    justify-content: space-between;
    padding: 10px 10px 0;
}
.btn {
    height: 28px;
    line-height: 26px;
    box-sizing: border-box;
    padding: 0 9px;
    background: #f7f7f7;
    border: 1px solid #ccc;
    border-radius: 3px;
    box-shadow: 0 1px 0 #ccc;
    font-size: 13px;
    color: #555;
}
.pubRow {
    height: 34px;
    display: flex;
    align-items: center;
    padding-left: 10px;
    font-size: 13px;
    color: #555;
    white-space: pre-wrap;
}
.pubActions + .pubRow {
    margin-top: 4px;
}
.pubRow b {
    font-weight: 600;
}
.pubRow a {
    margin-left: -1px;
    color: #0073aa;
    letter-spacing: -.1px;
}
.pubIcon {
    width: 18px;
    height: 18px;
    margin-right: 7px;
    flex: none;
    fill: #82878c;
}
.pubFoot {
    margin-top: 2px;
    height: 78px;
    box-sizing: border-box;
    padding: 14px 10px 0 12px;
    background: #f5f5f5;
    border-top: 1px solid #ddd;
}
.trash {
    font-size: 13px;
    line-height: 20px;
    color: #a00;
}
.submitWrap {
    display: flex;
    justify-content: flex-end;
    margin-top: 4px;
}
.btnPrimary {
    height: 30px;
    line-height: 28px;
    box-sizing: border-box;
    padding: 0 11px;
    background: #0085ba;
    border: 1px solid #006799;
    border-radius: 3px;
    font-size: 13px;
    color: #fff;
}
.formats {
    padding-top: 7px;
    height: 240px;
}
.fmt {
    height: 27.500px;
    display: flex;
    align-items: center;
    padding-left: 12px;
    font-size: 13px;
    color: #444;
}
.radio {
    width: 16px;
    height: 16px;
    box-sizing: border-box;
    flex: none;
    border: 1px solid #b4b9be;
    border-radius: 50%;
    background: #fff;
    margin-right: 9px;
    box-shadow: inset 0 1px 2px rgba(0,0,0,.1);
}
.radioOn {
    border-color: #5b9dd9;
    background: radial-gradient(circle, #4a90c9 0 3.500px, #fff 4px);
}
.fmtIcon {
    width: 18px;
    height: 18px;
    margin-right: 7px;
    flex: none;
    fill: #dcdcdc;
    color: #dcdcdc;
}
.fmtIconOn {
    fill: #82878c;
}

/* overlays on top of the screenshot */
.watermark {
    position: absolute;
    left: 842px;
    top: 726px;
    z-index: 2;
    display: flex;
    align-items: center;
    gap: 6px;
}
.wmIcon {
    width: 42px;
    height: 34px;
}
.wmText {
    font-family: "Noto Sans CJK SC", sans-serif;
    font-size: 24.500px;
    color: #fff;
    -webkit-text-stroke: .6px #444;
}
.wmUrl {
    position: absolute;
    left: 769px;
    top: 761px;
    z-index: 2;
    font-family: "Liberation Sans", sans-serif;
    font-size: 15.400px;
    color: rgba(190,190,190,.55);
    white-space: nowrap;
}
```
